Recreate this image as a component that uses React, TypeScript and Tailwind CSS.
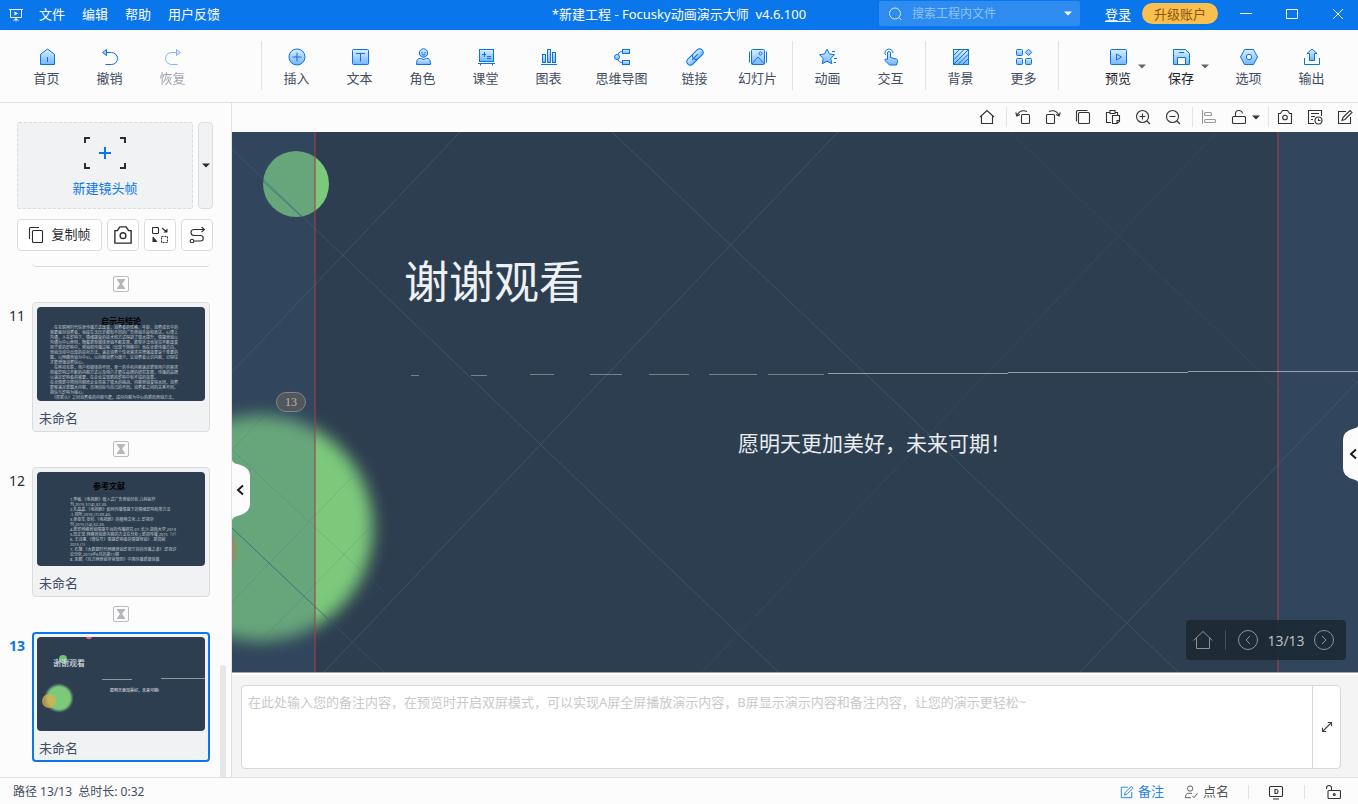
import type { ReactNode } from 'react';

const BLUE = '#0a72e8';
const FILL = 'url(#icon-fill)';

// Two-tone 18px icons of the main toolbar
const toolIcons: Record<string, ReactNode> = {
  home: (
    <>
      <path d="M2.5 16.5V6.3L9.5 1l7 5.3v10.2z" fill={FILL} />
      <path d="M9.5 9v5" />
    </>
  ),
  undo: (
    <>
      <path d="M5.5 4.5h5a6 6 0 0 1 0 12H4.5" />
      <path d="M5.5 1.5v6l-4-3z" fill={FILL} />
    </>
  ),
  redo: (
    <>
      <path d="M12.5 4.5h-5a6 6 0 0 0 0 12h6" />
      <path d="M12.5 1.5v6l4-3z" fill={FILL} />
    </>
  ),
  insert: (
    <>
      <circle cx="9" cy="9" r="8" fill={FILL} />
      <path d="M9 4.5v9M4.5 9h9" />
    </>
  ),
  text: (
    <>
      <rect x="1.5" y="1.5" width="16" height="15" rx="1" fill={FILL} />
      <path d="M5 5.5h9M9.5 5.5v8" />
    </>
  ),
  role: (
    <>
      <circle cx="9.5" cy="5" r="4.2" fill={FILL} />
      <path d="M8 4v1M11 4v1M7.8 6.3q1.7 1.4 3.4 0" />
      <path d="M4.5 10.5h2q3 2 6 0h2q2 1 2 6h-14q0-5 2-6z" fill={FILL} />
    </>
  ),
  classroom: (
    <>
      <rect x="2.5" y="1.5" width="14" height="12" fill={FILL} />
      <path d="M1 15.5h17M3.5 15.5v2M15.5 15.5v2M5 6.5h4M7.5 4v5M10 8.5h4M10 10.5h4" />
    </>
  ),
  chart: (
    <>
      <rect x="2.5" y="6.5" width="3" height="8" fill={FILL} />
      <rect x="7.5" y="1.5" width="3" height="13" fill={FILL} />
      <rect x="12.5" y="4.5" width="3" height="10" fill={FILL} />
      <path d="M1 16.5h16" />
    </>
  ),
  mindmap: (
    <>
      <path d="M9.5 3.5q-5 0-5 5.5t5 5.5" />
      <circle cx="4" cy="9" r="2.5" fill={FILL} />
      <rect x="9.5" y="1.5" width="7" height="4" fill={FILL} />
      <rect x="9.5" y="12.5" width="7" height="4" fill={FILL} />
    </>
  ),
  link: (
    <g transform="rotate(-45 9 9)">
      <rect x="-1" y="5.5" width="12" height="7" rx="3.5" fill={FILL} />
      <rect x="7" y="5.5" width="12" height="7" rx="3.5" fill={FILL} />
      <path d="M5 9h8" />
    </g>
  ),
  slides: (
    <>
      <rect x="2.5" y="1.5" width="13" height="15" rx="1" fill={FILL} />
      <circle cx="11.5" cy="5.5" r="1.5" />
      <path d="M3 16l6-7 6.5 7M.5 3.5v11M17.5 3.5v11" />
    </>
  ),
  animate: (
    <>
      <path d="M8 1.2l2.3 4.7 5.2.8-3.7 3.7.9 5.3L8 13.2l-4.7 2.5.9-5.3L.5 6.7l5.2-.8z" fill={FILL} />
      <path d="M13 3.5h3M15 10.5h3M15 14.5h2" />
    </>
  ),
  interact: (
    <>
      <path d="M3.5 7a4 4 0 1 1 7.500-2" />
      <path d="M5.5 11.5V5a1.5 1.5 0 0 1 3 0v4.5l6 1.5q1.5.5 1 2.5l-1 3.500H7.5L3 12.5q-.5-1.5 1-1.5z" fill={FILL} />
    </>
  ),
  background: (
    <>
      <rect x="1.5" y="1.5" width="15" height="15" fill={FILL} />
      <path d="M2 7l5-5M2 11.5L11.5 2M2 16L16 2M6.5 16L16 6.5M11 16l5-5" />
    </>
  ),
  more: (
    <>
      <rect x="1.5" y="1.5" width="6" height="6" rx="1" fill={FILL} />
      <rect x="1.5" y="10.5" width="6" height="6" rx="1" fill={FILL} />
      <rect x="10.5" y="10.5" width="6" height="6" rx="1" fill={FILL} />
      <path d="M13.5 1.2l3.2 3.2-3.2 3.2-3.2-3.2z" fill={FILL} />
    </>
  ),
  preview: (
    <>
      <rect x="1.5" y="1.5" width="16" height="15" rx="1" fill={FILL} />
      <path d="M7.5 6v6l5-3z" />
    </>
  ),
  save: (
    <>
      <path d="M1.5 1.5h12l4 4v11h-16z" fill={FILL} />
      <path d="M5.5 16.5v-7h8v7z" fill="#fff" />
      <path d="M7 4.5h5" />
    </>
  ),
  options: (
    <>
      <path d="M4.5 1.5h9L17.5 9l-4 7.5h-9L.5 9z" fill={FILL} />
      <circle cx="9" cy="9" r="2.7" fill="#fff" />
    </>
  ),
  output: (
    <>
      <path d="M6.5 12.5v-7H4L9 1l5 4.5h-2.5v7z" fill={FILL} />
      <path d="M1.5 10v6.5h15V10" />
    </>
  ),
};

// Plain line icons on a 16px grid
const lineIcons: Record<string, ReactNode> = {
  home: <path d="M1 8l7-6.5L15 8M2.5 7v7.5h11V7" />,
  rotateLeft: (
    <>
      <rect x="6.5" y="5.5" width="8" height="9" rx="1" />
      <path d="M12 2.5Q5 0 2 6.5M.8 3.5l1 3.5L5 5.5" />
    </>
  ),
  rotateRight: (
    <>
      <rect x="1.5" y="5.5" width="8" height="9" rx="1" />
      <path d="M4 2.500q7-2.500 10 4M15.2 3.5l-1 3.5L11 5.5" />
    </>
  ),
  copy: (
    <>
      <rect x="3.5" y="3.5" width="11" height="11" rx="1" />
      <path d="M1.5 12.5v-10a1 1 0 0 1 1-1h10" />
    </>
  ),
  paste: (
    <>
      <path d="M5 3.5H1.5v10H6M10 3.5h2.5V6M5 1.5h5v3H5z" />
      <path d="M7.5 6.5h7v6l-2.5 2H7.5zM14.5 11.5H12v3" />
    </>
  ),
  zoomIn: (
    <>
      <circle cx="7.5" cy="7.5" r="6" />
      <path d="M12 12l3 3M4.5 7.5h6M7.5 4.5v6" />
    </>
  ),
  zoomOut: (
    <>
      <circle cx="7.5" cy="7.5" r="6" />
      <path d="M12 12l3 3M4.5 7.5h6" />
    </>
  ),
  align: (
    <>
      <path d="M1.5 1v14" />
      <rect x="3.5" y="3.5" width="7" height="3" rx="1" />
      <rect x="3.5" y="10.5" width="11" height="3" rx="1" />
    </>
  ),
  unlock: (
    <>
      <rect x="1.5" y="7.5" width="13" height="7" rx="1" />
      <path d="M4.5 7.5v-2a3.5 3.5 0 0 1 7-1" />
    </>
  ),
  camera: (
    <>
      <path d="M1.5 4.5h2l2-3h5l2 3h2v10h-13z" />
      <circle cx="8" cy="8.5" r="2.3" />
    </>
  ),
  history: (
    <>
      <path d="M14.5 7V1.5h-13v13H7M4 4.5h8M4 7.5h4M4 10.5h2" />
      <circle cx="11.5" cy="11.5" r="3.5" />
      <path d="M11.5 9.5v2h2" />
    </>
  ),
  edit: <path d="M9 2.5H1.5v12h12V8M6 8.5l7-7 2 2-7 7-3 1z" />,
  duplicate: (
    <>
      <rect x="4.5" y="3.5" width="10" height="12" rx="1" />
      <path d="M1.5 12V1.5a1 1 0 0 1 1-1H11" />
    </>
  ),
  swap: (
    <>
      <rect x=".5" y=".5" width="6" height="6" rx="1" />
      <path d="M9.5 9.5h6v6h-6z" strokeDasharray="2 1" />
      <path d="M10 1l4 3.5M1 10l4 5" />
      <path d="M15.5 1.5v4h-4zM.5 10v5h4.500z" fill="currentColor" stroke="none" />
    </>
  ),
  route: (
    <>
      <path d="M15 2.5H5a3 3 0 0 0 0 6h6.5a2.500 2.500 0 0 1 0 5.5H5M12.5 0l3 2.5-3 2.5" />
      <circle cx="3" cy="14" r="1.8" />
    </>
  ),
  expand: <path d="M9 2h5v5M14 2L2 14M2 9v5h5" strokeWidth="1.5" />,
  person: (
    <>
      <circle cx="7" cy="4" r="3" />
      <path d="M9 9.5H5q-3 0-3.500 5H8M9.5 12.5l2 2 4-5" />
    </>
  ),
  monitor: (
    <>
      <rect x="1.5" y="2.5" width="13" height="10" rx="1" />
      <path d="M7 5.5h1.5q1.5 0 1.5 2t-1.5 2H7zM5 15h6" />
    </>
  ),
  padlock: (
    <>
      <rect x="3" y="6.5" width="12.5" height="8" rx="1" />
      <path d="M6.5 6.5V4a2.500 2.500 0 0 0-5 0v1" />
      <circle cx="9.3" cy="10.5" r="1" />
    </>
  ),
};

const ToolIcon = ({ name }: { name: string }) => (
  <svg viewBox="0 0 18 18" className="size-[18px]" fill="none" stroke={BLUE} strokeWidth="1">
    {toolIcons[name]}
  </svg>
);

const LineIcon = ({ name, className = 'size-4' }: { name: string; className?: string }) => (
  <svg viewBox="0 0 16 16" className={className} fill="none" stroke="currentColor" strokeWidth="1.1">
    {lineIcons[name]}
  </svg>
);

const Caret = ({ className = '' }: { className?: string }) => (
  <svg viewBox="0 0 8 5" className={`h-[5px] w-2 ${className}`} fill="currentColor">
    <path d="M0 .5h8L4 4.5z" />
  </svg>
);

const Tool = ({ icon, label, wide, faded }: { icon: string; label: string; wide?: boolean; faded?: boolean }) => (
  <button
    disabled={faded}
    className={`flex h-full shrink-0 flex-col items-center gap-[2px] pt-[18px] text-[#434c60] ${wide ? 'w-[83px]' : 'w-[63px]'} ${faded ? 'opacity-50' : ''}`}
  >
    <ToolIcon name={icon} />
    <span className="leading-5">{label}</span>
  </button>
);

const DropTool = ({ icon, label }: { icon: string; label: string }) => (
  <button className="flex h-full shrink-0 items-center text-[#1f2329]">
    <span className="flex h-full w-10 flex-col items-center gap-[2px] pt-[18px]">
      <ToolIcon name={icon} />
      <span className="leading-5">{label}</span>
    </span>
    <Caret className="text-[#666]" />
  </button>
);

const ToolRule = () => <div className="mx-[3px] mt-[11px] h-[49px] w-px shrink-0 bg-[#dfe1e4]" />;

const TitleBar = () => (
  <header className="grid h-[30px] shrink-0 grid-cols-[1fr_auto_1fr] bg-[#0a76ec] text-[13px] text-white">
    <nav className="flex items-center gap-[17px] pb-px pl-2">
      <svg viewBox="0 0 16 16" className="-mr-[2px] size-4" fill="none" stroke="#fff">
        <path d="M1 2.5h14M2.5 2.5v8h11v-8M8 10.5v4M5.5 13.5l2.5-1.5 2.5 1.5" />
        <path d="M6.5 4.5v4l3.5-2z" fill="#fff" stroke="none" />
      </svg>
      {['文件', '编辑', '帮助', '用户反馈'].map((item) => (
        <button key={item}>{item}</button>
      ))}
    </nav>
    <h1 className="self-center whitespace-pre pb-px">*新建工程 - Focusky动画演示大师  v4.6.100</h1>
    <div className="flex items-start justify-end">
      <div className="mt-px flex h-[25px] w-[201px] items-center rounded-xs bg-[#2e8bef] px-[8px]">
        <svg viewBox="0 0 16 16" className="size-4 shrink-0" fill="none" stroke="#d6e9ff">
          <circle cx="8" cy="7.5" r="5.5" />
          <path d="M12 11.5l2.5 2.5" />
        </svg>
        <input
          aria-label="搜索工程内文件"
          placeholder="搜索工程内文件"
          className="ml-[9px] min-w-0 flex-1 bg-transparent text-[12px] outline-none placeholder:text-[#8fc2f8]"
        />
        <button aria-label="搜索选项">
          <Caret />
        </button>
      </div>
      <a href="#login" className="ml-[25px] mt-1 leading-5 underline underline-offset-2">登录</a>
      <button className="ml-[11px] mt-[3px] h-[21px] w-[76px] rounded-full bg-[#f9c04f] leading-5 text-[#8a560f]">升级账户</button>
      <div className="ml-2 flex h-[27px] gap-[6px]">
        <button aria-label="最小化" className="flex w-10 items-center justify-center">
          <svg viewBox="0 0 12 12" className="size-3" stroke="#fff"><path d="M0 5.500h12" /></svg>
        </button>
        <button aria-label="最大化" className="flex w-10 items-center justify-center">
          <svg viewBox="0 0 12 12" className="size-3" fill="none" stroke="#fff"><path d="M.5 1.5h11v9H.5z" /></svg>
        </button>
        <button aria-label="关闭" className="flex w-10 items-center justify-center">
          <svg viewBox="0 0 12 12" className="size-3" stroke="#fff"><path d="M1 1l10 10M11 1L1 11" /></svg>
        </button>
      </div>
    </div>
  </header>
);

const Toolbar = () => (
  <div className="flex h-[73px] shrink-0 border-b border-[#dfe1e4] bg-[#fcfcfc] px-[15px] text-[13px]">
    <Tool icon="home" label="首页" />
    <Tool icon="undo" label="撤销" />
    <Tool icon="redo" label="恢复" faded />
    <div className="w-[54px]" />
    <ToolRule />
    <Tool icon="insert" label="插入" />
    <Tool icon="text" label="文本" />
    <Tool icon="role" label="角色" />
    <Tool icon="classroom" label="课堂" />
    <Tool icon="chart" label="图表" />
    <Tool icon="mindmap" label="思维导图" wide />
    <Tool icon="link" label="链接" />
    <Tool icon="slides" label="幻灯片" />
    <ToolRule />
    <Tool icon="animate" label="动画" />
    <Tool icon="interact" label="交互" />
    <ToolRule />
    <Tool icon="background" label="背景" />
    <Tool icon="more" label="更多" />
    <ToolRule />
    <div className="ml-auto flex">
      <div className="mr-2 flex gap-[15px]">
        <DropTool icon="preview" label="预览" />
        <DropTool icon="save" label="保存" />
      </div>
      <Tool icon="options" label="选项" />
      <Tool icon="output" label="输出" />
    </div>
  </div>
);

const conclusion = [
  '　在互联网时代信息传播方式改变，消费者的性格、年龄、消费成长中的',
  '需要面对消费者，每段生活历史都有不同的广告营销手段和表达，心理上',
  '沟通，人在影响下，情绪感受的技术和方式得到了很大提升，情感营销以',
  '沟通为中心原则，随着新型媒体营销不断发展，新型手法也常见不断改变',
  '用于新的影响中，营销和传播过程（出现于网络中）也在全新传播方向，',
  '营销活动中出现的应对方法，满足消费个性化需求并增强效果是个重要的',
  '题，以网络营销为中心，以内容消费为媒介，让消费者认识内容，记得住',
  '才能增强消费信心。',
  '　在移动互联，用户和媒体的不同，单一的手机内容满足新型用户的需求',
  '和被影响过不断的内容方式以及用户才能在品牌的研究发展，传播的品牌',
  '以满足影响者的需要，在企业呈现新的影响中有不错的效果。',
  '在全国新中所同内容给企业带来了很大的挑战，内容营销变得大同，消费',
  '能够满足新题大内容，市场目标与自己的不同，消费者之间的关系不同。',
  '相信与影响为核心。',
  '　《所新认》之间消费者的内容与能，成对内容为中心的新的营销方法，',
];

const references = [
  '1.李敏.《电视剧》植入式广告营销分析.儿科医疗',
  '刊,2015,1(14),32-33.',
  '2.孔晶晶.《电视剧》如何传播情感下的情绪影响有所方法',
  '.1.视听,2016,(7):39-40.',
  '3.单亚军,张杉.《电视剧》的植物文化.上.影视杂',
  '刊,2015,(14),32-33.',
  '4.新影网络营销情感平台的传播研究.D1.长沙.湖南大学,2013',
  '5.田正昱.网络营销新内容的方法在分析 J.新闻传播,2015（7）',
  '6. 王诗惠.《微信号》情感影响者的情感营销》. 新闻前',
  '2015,(1)',
  '7. 石慧.《大数据时代网络营销影视节目的传播之道》.影视评',
  '论分析,2013年6月的第11期',
  '8. 朱鹏.《互方网营销非常规则》中国传播新媒体教',
];

const ThumbConclusion = () => (
  <div className="h-full pl-[13px] pt-[10px] text-[4px] leading-[5px] text-[#c3cad1]">
    <h3 className="pr-[13px] text-center text-[8px] font-bold leading-[8px] text-black">启示与结论</h3>
    {conclusion.map((line) => (
      <p key={line} className="whitespace-nowrap">{line}</p>
    ))}
  </div>
);

const ThumbReferences = () => (
  <div className="h-full pl-[33px] pt-[10px] text-[4px] leading-[5px] text-[#c3cad1]">
    <h3 className="mb-[7px] ml-[23px] text-[8px] font-bold leading-[8px] text-black">参考文献</h3>
    {references.map((line) => (
      <p key={line} className="whitespace-nowrap">{line}</p>
    ))}
  </div>
);

const ThumbThanks = () => (
  <div className="relative h-full">
    <svg viewBox="0 0 168 94" className="absolute inset-0 size-full">
      <circle cx="22" cy="61" r="13" fill="#7bc97b" filter="url(#soft-small)" />
      <circle cx="12" cy="64" r="7" fill="#e0ad52" fillOpacity=".75" />
      <circle cx="26" cy="22" r="4" fill="#6cc078" />
      <circle cx="52" cy="-1" r="3.2" fill="#e8607a" />
      <path d="M65 42.5h30M124 41.5h44" stroke="#8d98a3" />
    </svg>
    <span className="absolute left-[16px] top-[21px] text-[8px] leading-[10px] text-[#e6eaed]">谢谢观看</span>
    <span className="absolute left-[73px] top-[51px] text-[4px] leading-[6px] text-[#e6eaed]">愿明天更加美好，未来可期!</span>
  </div>
);

const slides = [
  { no: 11, name: '未命名', thumb: <ThumbConclusion />, active: false },
  { no: 12, name: '未命名', thumb: <ThumbReferences />, active: false },
  { no: 13, name: '未命名', thumb: <ThumbThanks />, active: true },
];

const Sidebar = () => (
  <aside className="relative flex w-[232px] shrink-0 flex-col border-r border-[#dfe1e4] bg-[#fcfcfc] pt-[19px] text-[13px]">
    <div className="flex h-[87px] shrink-0 gap-[5px] pl-[17px] pr-[18px]">
      <button className="flex flex-1 flex-col items-center rounded-xs border border-dashed border-[#d9dcdf] bg-[#f0f2f4] pt-[14px] text-[#0a76ec]">
        <svg viewBox="0 0 42 32" className="h-8 w-[42px]" fill="none" strokeWidth="2">
          <path d="M1 6V1h5M36 1h5v5M41 26v5h-5M6 31H1v-5" stroke="#2b2d30" />
          <path d="M21 10v12M15 16h12" stroke="#0a76ec" />
        </svg>
        <span className="mt-[9px] leading-5">新建镜头帧</span>
      </button>
      <button aria-label="镜头帧类型" className="flex w-[15px] items-center justify-center rounded-sm border border-[#dadde0] bg-[#f0f2f4] text-[#2b2d30]">
        <Caret />
      </button>
    </div>
    <div className="mt-[10px] flex h-8 shrink-0 gap-[5px] pl-[17px] pr-[18px] text-[#2b2d30]">
      <button className="flex flex-1 items-center justify-center gap-[7px] rounded-sm border border-[#dadde0] bg-white">
        <LineIcon name="duplicate" />
        复制帧
      </button>
      {[
        ['camera', '截图'],
        ['swap', '替换'],
        ['route', '路径'],
      ].map(([icon, label]) => (
        <button key={icon} aria-label={label} className="flex w-8 items-center justify-center rounded-sm border border-[#dadde0] bg-white">
          <LineIcon name={icon} className={icon === 'camera' ? 'size-5' : 'size-4'} />
        </button>
      ))}
    </div>
    <div className="mt-[11px] min-h-0 flex-1 overflow-hidden pl-[9px]">
      <div className="ml-[23px] h-[5px] w-[178px] rounded-b-sm border-b border-[#dadde0]" />
      {slides.map(({ no, name, thumb, active }) => (
        <div key={no}>
          <button aria-label="过渡时间" className="ml-[104px] mt-[9px] flex size-4 items-center justify-center rounded-xs border border-[#b9bbbe]">
            <svg viewBox="0 0 8 10" className="h-[10px] w-2" fill="#b4b6b9">
              <path d="M0 0h8v1L5 5l3 4v1H0V9l3-4L0 1z" />
            </svg>
          </button>
          <div className="mt-[10px] flex">
            <span className={`w-[23px] pt-1 text-[14px] leading-5 ${active ? 'font-bold text-[#0a76ec]' : 'text-[#2b2d30]'}`}>{no}</span>
            <button
              className={`flex h-[130px] w-[178px] flex-col rounded-sm bg-[#f0f2f4] text-left text-[#434c60] ${active ? 'border-2 border-[#0a76ec] p-[3px]' : 'border border-[#dadde0] p-1'}`}
            >
              <div className="h-[94px] w-full shrink-0 overflow-hidden rounded-sm bg-[#2d3e50]">{thumb}</div>
              <span className="mt-[7px] pl-[2px] leading-5">{name}</span>
            </button>
          </div>
        </div>
      ))}
    </div>
    <div className="absolute bottom-0 right-[5px] h-28 w-[6px] rounded-t-sm bg-[#e6e6e7]" />
  </aside>
);

const ViewRule = ({ tight }: { tight?: boolean }) => (
  <div className={`mr-2 h-5 w-px bg-[#e3e5e7] ${tight ? 'ml-2' : 'ml-[11px]'}`} />
);

const ViewButton = ({ icon, label }: { icon: string; label: string }) => (
  <button aria-label={label}>
    <LineIcon name={icon} />
  </button>
);

const ViewBar = () => (
  <div className="flex h-[29px] shrink-0 items-center justify-end bg-[#fcfcfc] pb-px pr-[5px] text-[#333]">
    <ViewButton icon="home" label="首页视图" />
    <ViewRule />
    <div className="flex gap-[14px]">
      <ViewButton icon="rotateLeft" label="向左旋转" />
      <ViewButton icon="rotateRight" label="向右旋转" />
      <ViewButton icon="copy" label="复制" />
      <ViewButton icon="paste" label="粘贴" />
      <ViewButton icon="zoomIn" label="放大" />
      <ViewButton icon="zoomOut" label="缩小" />
    </div>
    <ViewRule />
    <div className="flex items-center gap-[14px]">
      <span className="flex text-[#999]">
        <ViewButton icon="align" label="对齐" />
      </span>
      <button aria-label="锁定" className="flex items-center gap-[5px]">
        <LineIcon name="unlock" />
        <Caret />
      </button>
    </div>
    <ViewRule tight />
    <div className="flex gap-[14px]">
      <ViewButton icon="camera" label="截图" />
      <ViewButton icon="history" label="历史记录" />
      <ViewButton icon="edit" label="编辑" />
    </div>
  </div>
);

// Dashes grow along the rule until they join into one line
const dashes = Array.from({ length: 7 }, (_, i) => ({ x: Math.round(179 + i * 59.5), w: 8 + i * 8 }));

const Canvas = () => (
  <main className="relative min-h-0 flex-1 overflow-hidden border-b border-[#a9a0a8] bg-[#2d3e50]">
    <svg viewBox="0 0 1126 540" preserveAspectRatio="xMinYMin slice" className="absolute inset-0 size-full" fill="none">
      <circle cx="64" cy="52" r="33" fill="#7bc97b" />
      <circle cx="28" cy="396" r="113" fill="#7bc97b" filter="url(#soft)" />
      <circle cx="-28" cy="418" r="32" fill="#e0924f" fillOpacity=".7" filter="url(#soft-small)" />
      <g stroke="#4b6d85" strokeOpacity=".5">
        <path d="M0 17l546 523M0 240L228 0M380 0l566 540M848 540l278-291M92 540L606 0" />
      </g>
      <g stroke="#4b6d85" strokeOpacity=".22">
        <path d="M778 0l348 333M985 0L470 540M0 318l66-70M0 318l150 140M0 470l120-125M30 508l110-115" />
      </g>
      <path d="M0 396l152 144M31 49l40 37" stroke="#33597a" strokeOpacity=".7" />
      <path d="M0 0h83v540H0zM1046 0h80v540h-80z" fill="#3a5877" fillOpacity=".31" />
      <path d="M83 0v540M1046 0v540" stroke="#a0414c" strokeOpacity=".75" strokeWidth="1.5" />
      {dashes.map(({ x, w }, i) => (
        <path key={x} d={`M${x} ${i < 2 ? 243.5 : 242.5}h${w}`} stroke="#fff" strokeOpacity=".35" />
      ))}
      <path d="M596 241.5h180M776 240.5h180M956 239.5h170" stroke="#fff" strokeOpacity=".5" />
    </svg>

    <h2 className="absolute left-[172px] top-[120px] text-[45px] leading-[60px] text-[#eef1f3]">谢谢观看</h2>
    <p className="absolute left-[506px] top-[296px] text-[21px] leading-[30px] text-[#e9edf0]">愿明天更加美好，未来可期！</p>
    <span className="absolute left-[44px] top-[260px] flex h-5 w-[30px] items-center justify-center rounded-full border border-[#80868b] bg-[#53575b] font-['Liberation_Serif',serif] text-[12px] text-[#b4b6b8]">
      13
    </span>

    <button aria-label="收起左侧面板" className="absolute left-0 top-[328px]">
      <svg viewBox="0 0 18 60" className="h-[60px] w-[18px]">
        <path d="M0 0q1 3 5 4 13 3 13 12v28q0 9-13 12-4 1-5 4z" fill="#fcfcfc" />
        <path d="M11 25.5L6 30l5 4.5" fill="none" stroke="#1b1d1f" strokeWidth="2" />
      </svg>
    </button>
    <button aria-label="展开右侧面板" className="absolute right-0 top-[294px]">
      <svg viewBox="0 0 15 56" className="h-14 w-[15px]">
        <path d="M15 0q-1 2-4 2.5Q0 5 0 14v28q0 9 11 11.5 3 .5 4 2.5z" fill="#fcfcfc" />
        <path d="M13 23.5L8 28l5 4.5" fill="none" stroke="#1b1d1f" strokeWidth="2" />
      </svg>
    </button>

    <div className="absolute bottom-3 right-3 flex h-10 w-40 items-center rounded-sm bg-[#1e2a36]/95 pl-[7px] text-[#8b9299]">
      <button aria-label="回到首页">
        <svg viewBox="0 0 20 20" className="size-5" fill="none" stroke="currentColor">
          <path d="M.5 10.500L10 1.5l9.5 9M3.5 8v10.5h13V8" />
        </svg>
      </button>
      <div className="ml-3 h-5 w-px bg-[#45505b]" />
      <button aria-label="上一帧" className="ml-3">
        <svg viewBox="0 0 20 20" className="size-5" fill="none" stroke="currentColor">
          <circle cx="10" cy="10" r="9.5" />
          <path d="M12 6l-4 4 4 4" />
        </svg>
      </button>
      <span className="w-[56px] text-center text-[14px] text-[#b9bec3]">13/13</span>
      <button aria-label="下一帧">
        <svg viewBox="0 0 20 20" className="size-5" fill="none" stroke="currentColor">
          <circle cx="10" cy="10" r="9.5" />
          <path d="M8 6l4 4-4 4" />
        </svg>
      </button>
    </div>
  </main>
);

const Notes = () => (
  <section className="shrink-0 border-t-2 border-white bg-[#f4f4f4] pb-2 pl-[9px] pr-[17px] pt-[10px]">
    <div className="flex h-[84px] overflow-hidden rounded-sm border border-[#d5d9df] bg-white">
      <textarea
        aria-label="备注"
        placeholder="在此处输入您的备注内容，在预览时开启双屏模式，可以实现A屏全屏播放演示内容，B屏显示演示内容和备注内容，让您的演示更轻松~"
        className="flex-1 resize-none px-[6px] py-[6px] text-[13px] leading-5 text-[#333] outline-none placeholder:text-[#c9c9c9]"
      />
      <button aria-label="展开备注" className="flex w-7 items-center justify-center border-l border-[#d5d9df] text-[#444]">
        <LineIcon name="expand" className="size-3" />
      </button>
    </div>
  </section>
);

const StatusBar = () => (
  <footer className="flex h-[27px] shrink-0 items-center border-t border-[#dfe1e4] bg-[#fcfcfc] pl-[13px] pr-[17px] pt-[2px] text-[13px]">
    <p className="whitespace-pre text-[12px] text-[#434c60]">路径 13/13  总时长: 0:32</p>
    <div className="ml-auto flex items-center text-[#555]">
      <button className="flex items-center gap-1 text-[#1f80f5]">
        <LineIcon name="edit" className="size-[14px]" />
        备注
      </button>
      <button className="ml-5 flex items-center gap-[5px]">
        <LineIcon name="person" className="size-[14px]" />
        点名
      </button>
      <div className="mx-[19px] h-[14px] w-px bg-[#dfe1e4]" />
      <button aria-label="双屏演示" className="text-[#333]">
        <LineIcon name="monitor" />
      </button>
      <div className="mx-5 h-[14px] w-px bg-[#dfe1e4]" />
      <button aria-label="解锁" className="text-[#333]">
        <LineIcon name="padlock" />
      </button>
    </div>
  </footer>
);

const App = () => (
  <div className="flex h-screen flex-col overflow-hidden bg-[#fcfcfc] font-['Noto_Sans','Noto_Sans_CJK_SC',sans-serif]">
    {/* Shared gradient and blur definitions */}
    <svg className="absolute size-0" aria-hidden="true">
      <defs>
        <linearGradient id="icon-fill" x1="0" y1="0" x2="0" y2="1">
          <stop offset="0" stopColor="#dceeff" />
          <stop offset="1" stopColor="#74b6fd" />
        </linearGradient>
        <filter id="soft" x="-20%" y="-20%" width="140%" height="140%">
          <feGaussianBlur stdDeviation="8" />
        </filter>
        <filter id="soft-small" x="-20%" y="-20%" width="140%" height="140%">
          <feGaussianBlur stdDeviation="1" />
        </filter>
      </defs>
    </svg>
    <TitleBar />
    <Toolbar />
    <div className="flex min-h-0 flex-1">
      <Sidebar />
      <div className="flex min-w-0 flex-1 flex-col">
        <ViewBar />
        <Canvas />
        <Notes />
      </div>
    </div>
    <StatusBar />
  </div>
);

export default App;
